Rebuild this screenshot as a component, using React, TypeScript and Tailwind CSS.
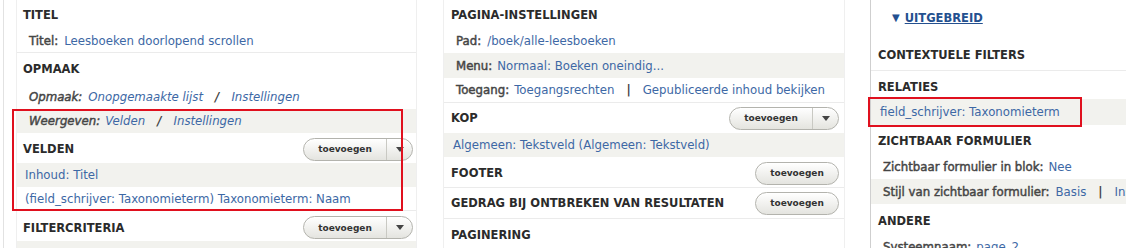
import React from "react";

const LINK = "text-[#3d68a5]";
const LABEL = "text-[#454545] [-webkit-text-stroke:0.45px_#454545]";

function Arrow() {
  return (
    <svg width="8" height="5" viewBox="0 0 8 5" className="block">
      <path d="M0 0 L8 0 L4 5 Z" fill="#444" />
    </svg>
  );
}

function AddButton({ dropdown = false }: { dropdown?: boolean }) {
  return (
    <div className="flex h-[23px] items-stretch rounded-full border border-[#b3b3ad] bg-linear-to-b from-white to-[#e4e4df] text-[9px] font-bold text-[#333] shadow-[inset_0_1px_0_#fff]">
      <span className="flex w-[82px] items-center justify-center">toevoegen</span>
      {dropdown && (
        <span className="flex w-[26px] items-center justify-center border-l border-[#c9c9c3]">
          <Arrow />
        </span>
      )}
    </div>
  );
}

function Heading({
  children,
  h,
  pl,
  pr = "",
  extra = "",
  button,
}: {
  children: React.ReactNode;
  h: string;
  pl: string;
  pr?: string;
  extra?: string;
  button?: React.ReactNode;
}) {
  return (
    <div className={`flex items-center justify-between ${h} ${pl} ${pr} ${extra}`}>
      <span className="text-[11.5px] font-bold uppercase text-[#2b2b2b]">{children}</span>
      {button}
    </div>
  );
}

function Sep({ ch }: { ch: string }) {
  return <span className="mx-[12px] font-bold text-[#444]">{ch}</span>;
}

export default function App() {
  return (
    <div className="flex h-[248px] w-[1126px] overflow-hidden bg-white font-['DejaVu_Sans',sans-serif] text-[11.75px] leading-[14px]">
      {/* Column 1 */}
      <div className="ml-[3px] w-[413px] shrink-0 border-l border-[#e2e2e2] pl-[12px]">
        <div className="w-[401px] border-x border-[#efefef]">
          <Heading h="h-[29px]" pl="pl-[6px]">Titel</Heading>
          <div className="flex h-[24px] items-center border-b border-[#ebebeb] pl-[12px]">
            <span className={LABEL}>Titel:</span>
            <span className={`ml-[6px] ${LINK}`}>Leesboeken doorlopend scrollen</span>
          </div>
          <Heading h="h-[31px]" pl="pl-[6px]" extra="pt-[1px]">Opmaak</Heading>
          <div className="flex h-[25px] items-center pl-[12px] italic">
            <span className={LABEL}>Opmaak:</span>
            <span className={`ml-[6px] ${LINK}`}>Onopgemaakte lijst</span>
            <Sep ch="/" />
            <span className={LINK}>Instellingen</span>
          </div>
          <div className="relative">
            <div className="flex h-[24px] items-center bg-[#f2f2ee] pl-[12px] italic">
              <span className={LABEL}>Weergeven:</span>
              <span className={`ml-[5px] ${LINK}`}>Velden</span>
              <Sep ch="/" />
              <span className={LINK}>Instellingen</span>
            </div>
            <Heading
              h="h-[30px]"
              pl="pl-[6px]"
              pr="pr-[3px]"
              extra="pt-[2px]"
              button={<AddButton dropdown />}
            >
              Velden
            </Heading>
            <div className={`flex h-[24px] items-center bg-[#f2f2ee] pl-[8px] ${LINK}`}>Inhoud: Titel</div>
            <div className={`flex h-[24px] items-center border-b border-[#ebebeb] pl-[8px] ${LINK}`}>
              (field_schrijver: Taxonomieterm) Taxonomieterm: Naam
            </div>
            <div className="pointer-events-none absolute -left-[5px] right-[13px] top-0 bottom-0 border-2 border-[#e0101e]" />
          </div>
          <Heading
            h="h-[30px]"
            pl="pl-[6px]"
            pr="pr-[3px]"
            extra="pt-[3px]"
            button={<AddButton dropdown />}
          >
            Filtercriteria
          </Heading>
          <div className="h-[24px] bg-[#f2f2ee]" />
        </div>
      </div>

      {/* Column 2 */}
      <div className="ml-[27px] w-[402px] shrink-0 border-x border-[#efefef]">
        <Heading h="h-[29px]" pl="pl-[7px]">Pagina-instellingen</Heading>
        <div className="flex h-[24px] items-center pl-[12px]">
          <span className={LABEL}>Pad:</span>
          <span className={`ml-[6px] ${LINK}`}>/boek/alle-leesboeken</span>
        </div>
        <div className="flex h-[25px] items-center bg-[#f2f2ee] pl-[12px]">
          <span className={LABEL}>Menu:</span>
          <span className={`ml-[5px] ${LINK}`}>Normaal: Boeken oneindig...</span>
        </div>
        <div className="flex h-[25px] items-center border-b border-[#ebebeb] pl-[12px]">
          <span className={LABEL}>Toegang:</span>
          <span className={`ml-[5px] ${LINK}`}>Toegangsrechten</span>
          <Sep ch="|" />
          <span className={LINK}>Gepubliceerde inhoud bekijken</span>
        </div>
        <Heading h="h-[30px]" pl="pl-[7px]" pr="pr-[5px]" button={<AddButton dropdown />}>
          Kop
        </Heading>
        <div className={`flex h-[24px] items-center bg-[#f2f2ee] pl-[9px] ${LINK}`}>
          Algemeen: Tekstveld (Algemeen: Tekstveld)
        </div>
        <Heading
          h="h-[31px]"
          pl="pl-[7px]"
          pr="pr-[5px]"
          extra="border-b border-[#ebebeb] pt-[2px]"
          button={<AddButton />}
        >
          Footer
        </Heading>
        <Heading
          h="h-[31px]"
          pl="pl-[7px]"
          pr="pr-[5px]"
          extra="border-b border-[#ebebeb]"
          button={<AddButton />}
        >
          Gedrag bij ontbreken van resultaten
        </Heading>
        <Heading h="h-[31px]" pl="pl-[7px]">Paginering</Heading>
      </div>

      {/* Column 3 */}
      <div className="ml-[25px] min-w-0 flex-1 border-l border-[#cfcfcf]">
        <div className="flex h-[40px] items-start pl-[21px] pt-[11px]">
          <span className="text-[10px] text-[#24508f]">▼</span>
          <span className="ml-[5px] text-[11.5px] font-bold text-[#24508f] underline">UITGEBREID</span>
        </div>
        <Heading h="h-[31px]" pl="pl-[7px]" extra="border-b border-[#ebebeb]">
          Contextuele filters
        </Heading>
        <Heading h="h-[28px]" pl="pl-[7px]" extra="pt-[3px]">Relaties</Heading>
        <div className="relative">
          <div className={`flex h-[26px] items-center bg-[#f2f2ee] pl-[9px] ${LINK}`}>
            field_schrijver: Taxonomieterm
          </div>
          <div className="pointer-events-none absolute -left-[3px] -top-[2px] -bottom-[2px] w-[214px] border-2 border-[#e0101e]" />
        </div>
        <Heading h="h-[30px]" pl="pl-[7px]" extra="pt-[2px]">Zichtbaar formulier</Heading>
        <div className="flex h-[24px] items-center pl-[12px] whitespace-nowrap">
          <span className={LABEL}>Zichtbaar formulier in blok:</span>
          <span className={`ml-[5px] ${LINK}`}>Nee</span>
        </div>
        <div className="flex h-[25px] items-center bg-[#f2f2ee] pl-[12px] whitespace-nowrap">
          <span className={LABEL}>Stijl van zichtbaar formulier:</span>
          <span className={`ml-[6px] ${LINK}`}>Basis</span>
          <Sep ch="|" />
          <span className={LINK}>Instellingen</span>
        </div>
        <Heading h="h-[31px]" pl="pl-[7px]" extra="pt-[2px]">Andere</Heading>
        <div className="flex h-[22px] items-center pl-[12px] pt-[2px] whitespace-nowrap">
          <span className={LABEL}>Systeemnaam:</span>
          <span className={`ml-[5px] ${LINK}`}>page_2</span>
        </div>
      </div>
    </div>
  );
}
